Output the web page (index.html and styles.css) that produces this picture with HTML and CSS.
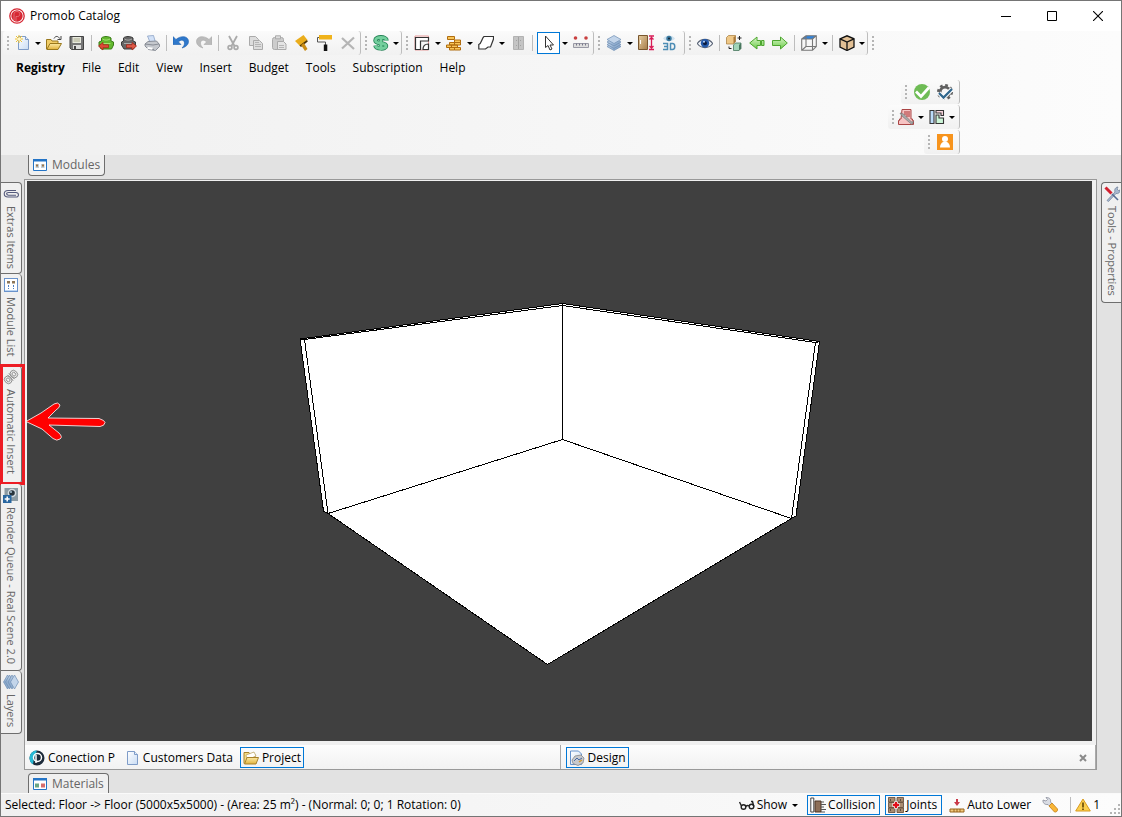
FILE: index.html
```html
<!DOCTYPE html>
<html lang="en">
<head>
<meta charset="utf-8">
<title>Promob Catalog</title>
<link rel="stylesheet" href="styles.css">
</head>
<body>
<svg class="defs" aria-hidden="true">
  <defs>
    <linearGradient id="gPaper" x1="0" y1="0" x2="1" y2="1"><stop offset="0" stop-color="#fff"/><stop offset="1" stop-color="#c9dcf4"/></linearGradient>
    <linearGradient id="gGold" x1="0" y1="0" x2="0" y2="1"><stop offset="0" stop-color="#fbe9a4"/><stop offset="1" stop-color="#e2b33c"/></linearGradient>
    <linearGradient id="gLayer" x1="0" y1="0" x2="1" y2="1"><stop offset="0" stop-color="#d3e2f2"/><stop offset="1" stop-color="#6f93bd"/></linearGradient>
    <linearGradient id="gArrow" x1="0" y1="0" x2="0" y2="1"><stop offset="0" stop-color="#d9f7c8"/><stop offset="1" stop-color="#6ccb4a"/></linearGradient>
    <linearGradient id="gDoor" x1="0" y1="0" x2="1" y2="1"><stop offset="0" stop-color="#e6cda2"/><stop offset="1" stop-color="#a67c48"/></linearGradient>
    <symbol id="caret" viewBox="0 0 6 3"><path d="M0 0h6L3 3z" fill="#000"/></symbol>
    <symbol id="page" viewBox="0 0 16 16"><path d="M3.500 1.500h7l3 3v10h-10z" fill="url(#gPaper)" stroke="#7f9cc8"/><path d="M10.500 1.500v3h3" fill="#e3eefc" stroke="#7f9cc8"/></symbol>
    <symbol id="layers" viewBox="0 0 16 16"><g stroke="#6d8db3" stroke-width=".7" fill="url(#gLayer)"><path d="M1 11.500L8 7.500l7 4-7 4z"/><path d="M1 9.500L8 5.500l7 4-7 4z"/><path d="M1 7L8 3l7 4-7 4z"/><path d="M1 4.500L8 .5l7 4-7 4z" fill="#c3d5ea"/></g></symbol>
  </defs>
</svg>
<div class="window">
  <header class="titlebar">
    <svg class="icon" viewBox="0 0 16 16"><circle cx="8" cy="8" r="7.200" fill="#fff" stroke="#d62733" stroke-width="1.300"/><circle cx="8" cy="8" r="5.700" fill="#d62733"/><path d="M7 14V8.500h1.500c3 0 3.500-5-.5-5-2 0-3 1-3 3V12" fill="none" stroke="#e9868d" stroke-width=".7"/></svg>
    <h1 class="title">Promob Catalog</h1>
    <button class="caption" aria-label="Minimize"><svg viewBox="0 0 10 10"><path d="M0 5.500h10" stroke="#000"/></svg></button>
    <button class="caption" aria-label="Maximize"><svg viewBox="0 0 10 10"><path d="M.5.5h9v9h-9z" fill="none" stroke="#000"/></svg></button>
    <button class="caption" aria-label="Close"><svg viewBox="0 0 10 10"><path d="M0 0l10 10M10 0L0 10" stroke="#000" stroke-width="1.100"/></svg></button>
  </header>

  <section class="ribbon">
    <div class="toolbars">
      <div class="strip">
        <i class="grip"></i>
        <button class="tool" aria-label="New"><svg class="icon" viewBox="0 0 16 16"><use href="#page"/><path d="M4 0v8M0 4h8M1 1l6 6M7 1L1 7" stroke="#f0c22e"/><circle cx="4" cy="4" r="1.500" fill="#fff8c8"/></svg></button>
        <button class="drop" aria-label="New options"><svg><use href="#caret"/></svg></button>
        <button class="tool" aria-label="Open"><svg class="icon" viewBox="0 0 16 16"><path d="M.5 14V4.500h4.500l1 1.500h6v3" fill="#f1cd68" stroke="#99781d"/><path d="M.8 14.500L4 8.500h11.500L12 14.500z" fill="url(#gGold)" stroke="#99781d"/><path d="M8 3.500c1.500-3 4.500-2.500 5.500 0M15 1v3.500h-3.500" fill="none" stroke="#444"/></svg></button>
        <button class="tool" aria-label="Save"><svg class="icon" viewBox="0 0 16 16"><path d="M1 1.500h13.500v13H2.500L1 13z" fill="#777" stroke="#444"/><path d="M3.500 2h8.500v6H3.500z" fill="#e8eadf"/><path d="M4.500 4h6.500M4.500 6h6.500" stroke="#aaa98c"/><path d="M4 10h8v4H4z" fill="#ddd"/><path d="M5 11h2v3H5z" fill="#444"/></svg></button>
        <i class="sep"></i>
        <button class="tool" aria-label="Import"><svg class="icon" viewBox="0 0 16 16"><path d="M3.500 6V3c2-2 7-2 9.500 0v3l2.500 1v3l-2 4H3L1 10V7z" fill="#63b82f" stroke="#397c17"/><path d="M4.500 4c2 1.500 5 1.500 7.500 0M3.500 8.500h9" stroke="#a4e271" fill="none"/><path d="M.5 11L5 7.500v2.200h5.500v3H5V15z" fill="#dd4a38" stroke="#a62619" stroke-width=".8"/></svg></button>
        <button class="tool" aria-label="Export"><svg class="icon" viewBox="0 0 16 16"><path d="M2.500 6V3c2-2 7-2 9.500 0v3l2.500 1v3l-2 4H3L.5 10V7z" fill="#666" stroke="#3a3a3a"/><path d="M3.500 4c2 1.500 5 1.500 7.500 0M3 8.500h9" stroke="#aaa" fill="none"/><path d="M15.500 11L11 7.500v2.200H5.500v3H11V15z" fill="#dd5a48" stroke="#a62619" stroke-width=".8"/></svg></button>
        <button class="tool" aria-label="Print"><svg class="icon" viewBox="0 0 16 16"><path d="M3.500 1l6-.5 2 7-5 1z" fill="#d2e1f7" stroke="#8ba2c5" stroke-width=".8"/><path d="M1 9l3-2.500 8.500-.5 3 3.500v2l-4 4-7-1L1 11z" fill="#c5c8cd" stroke="#777c86" stroke-width=".8"/><path d="M1 9l8 1 6-1M4 13l6 1.500" fill="none" stroke="#777c86" stroke-width=".8"/><path d="M4 12l5 .7-1 2-5-1z" fill="#fff"/></svg></button>
        <i class="sep"></i>
        <button class="tool" aria-label="Undo"><svg class="icon" viewBox="0 0 16 16"><path d="M0 1.500v8h8L5.500 7c2.500-3 6-2 6 1 0 2-1 3.500-2.500 5 4-1 6.500-3.500 6.500-6.500C15.500 1 8 0 3 4.500z" fill="#2f78cb" stroke="#1d5fae" stroke-width=".6"/></svg></button>
        <button class="tool" aria-label="Redo"><svg class="icon" viewBox="0 0 16 16"><path d="M16 1.500v8H8L10.500 7c-2.500-3-6-2-6 1 0 2 1 3.500 2.500 5C3 12 .5 9.500.5 6.500.5 1 8 0 13 4.500z" fill="#bbb" stroke="#aaa" stroke-width=".6"/></svg></button>
        <i class="sep"></i>
        <button class="tool" aria-label="Cut"><svg class="icon" viewBox="0 0 16 16"><path d="M4 1l5.500 10M12 1L6.500 11" stroke="#aaa" stroke-width="1.800"/><g fill="none" stroke="#aaa" stroke-width="1.700"><circle cx="5" cy="12.500" r="1.900"/><circle cx="11" cy="12.500" r="1.900"/></g></svg></button>
        <button class="tool" aria-label="Copy"><svg class="icon" viewBox="0 0 16 16"><g fill="#ddd" stroke="#aaa"><path d="M1.500 1.500h6l3 3v6h-9z"/><path d="M5.500 5.500h6l3 3v6h-9z"/></g><path d="M7 9.500h6M7 11.500h6M7 7.500h4" stroke="#b5b5b5"/></svg></button>
        <button class="tool" aria-label="Paste"><svg class="icon" viewBox="0 0 16 16"><rect x="1.500" y="2.500" width="11" height="12" rx="2" fill="#ccc" stroke="#aaa"/><path d="M4.500.8h5v3h-5z" fill="#ddd" stroke="#aaa"/><path d="M6.500 6.500h6l2.500 2.500v5.500H6.500z" fill="#e4e4e4" stroke="#aaa"/><path d="M8 10.500h5M8 12.500h5" stroke="#b5b5b5"/></svg></button>
        <button class="tool" aria-label="Brush"><svg class="icon" viewBox="0 0 16 16"><path d="M1 6L9.500 0l4 5L6 11z" fill="#eaad1c"/><path d="M5.500 10.500L13 5l.8 1.500L7 12z" fill="#4a3305"/><path d="M7 10l3-2 3.500 6-2.500 2z" fill="#c98c14"/></svg></button>
        <button class="tool" aria-label="Roller"><svg class="icon" viewBox="0 0 16 16"><path d="M2 0h13v4.500H2z" fill="#f0b31b"/><path d="M2 2.500H.5v4.500h8v3" fill="none" stroke="#555"/><path d="M6.800 9.500h3.500V16H6.800z" fill="#111"/></svg></button>
        <button class="tool" aria-label="Delete"><svg class="icon" viewBox="0 0 16 16"><path d="M2 3l12 11M14 2.500L2 13.500" stroke="#b5b5b5" stroke-width="2.200"/></svg></button>
      </div>
      <div class="strip">
        <i class="grip"></i>
        <button class="tool" aria-label="Budget prices"><svg class="icon" viewBox="0 0 16 16"><path d="M13.500 5.500c0-4-11-4.500-11 0 0 4 10.500 1.500 10.500 5.500 0 3.500-10 3-10.500-.5M8 .5v15" fill="none" stroke="#238255" stroke-width="4.500"/><path d="M13.500 5.500c0-4-11-4.500-11 0 0 4 10.500 1.500 10.500 5.500 0 3.500-10 3-10.500-.5M8 1v14" fill="none" stroke="#73cf9d" stroke-width="2.800"/></svg></button>
        <button class="drop" aria-label="Price options"><svg><use href="#caret"/></svg></button>
      </div>
      <div class="strip">
        <i class="grip"></i>
        <button class="tool" aria-label="Walls"><svg class="icon" viewBox="0 0 16 16"><path d="M1 1h13.500v14H1z" fill="none" stroke="#e59a9a"/><path d="M1.500 14.500v-12h13V6H6.500v8.500z" fill="#fff" stroke="#333" stroke-width="1.200"/><path d="M14.500 9v5.500H9c0-3.500 2-5.500 5.500-5.500z" fill="#fff" stroke="#333" stroke-width="1.200"/></svg></button>
        <button class="drop wide" aria-label="Wall options"><svg><use href="#caret"/></svg></button>
        <button class="tool" aria-label="Bricks"><svg class="icon" viewBox="0 0 16 16"><g fill="#f8c659" stroke="#b06c0e"><path d="M1.500 1.500h7v3h-7zM3.500 7.500h5v2.500h-5zM8.500 7.500h6v2.500h-6zM.5 10h5v2.500h-5zM5.500 10h6v2.500h-6zM3.500 12.500h5V15h-5zM8.500 12.500h6V15h-6zM8.500 5h6v2.500h-6z"/></g></svg></button>
        <button class="drop wide" aria-label="Brick options"><svg><use href="#caret"/></svg></button>
        <button class="tool" aria-label="Shape"><svg class="icon" viewBox="0 0 16 16"><path d="M6 1.500h9.500V4L12.500 12H10l-2.500 2H.8V9.500C4 8 3.500 3.500 6 1.500z" fill="#fff" stroke="#333" stroke-width="1.200"/></svg></button>
        <button class="drop wide" aria-label="Shape options"><svg><use href="#caret"/></svg></button>
        <button class="tool" aria-label="Cabinet"><svg class="icon" viewBox="0 0 16 16"><path d="M3.500 1.500h10v13h-10z" fill="#c4c4c4" stroke="#b3b3b3"/><path d="M8.500 2v12M6 5.500h1M10 5.500h1M6 10.500h1M10 10.500h1" stroke="#a2a2a2"/></svg></button>
        <i class="sep"></i>
        <button class="tool selected" aria-label="Select" aria-pressed="true"><svg class="icon" viewBox="0 0 16 16"><path d="M4.500 1v11.500L7 10.500l2 4.500 2-1-2-4h3.500z" fill="#fff" stroke="#333"/></svg></button>
        <button class="drop wide" aria-label="Select options"><svg><use href="#caret"/></svg></button>
        <button class="tool" aria-label="Measure"><svg class="icon" viewBox="0 0 16 16"><circle cx="2.500" cy="3" r="1.800" fill="#c94040"/><circle cx="13" cy="3" r="1.800" fill="#c94040"/><path d="M.5 8.500h15v4H.5z" fill="#ddd" stroke="#9999a5"/><path d="M3.500 8.500v2M6.500 8.500v2M9.500 8.500v2M12.500 8.500v2" stroke="#77778a"/></svg></button>
      </div>
      <div class="strip roomy">
        <i class="grip"></i>
        <button class="tool" aria-label="Layers"><svg class="icon"><use href="#layers"/></svg></button>
        <button class="drop wide" aria-label="Layer options"><svg><use href="#caret"/></svg></button>
        <button class="tool" aria-label="Door height"><svg class="icon" viewBox="0 0 16 16"><path d="M.5.500h9v14h-9z" fill="url(#gDoor)" stroke="#79572e"/><path d="M2.500 5v4" stroke="#fff"/><path d="M11 1h5M11 14.500h5M13.500 2v12M11.500 4.500l2-2 2 2M11.500 11l2 2 2-2" fill="none" stroke="#d81b56" stroke-width="1.300"/></svg></button>
        <button class="tool" aria-label="3D view"><svg class="icon" viewBox="0 0 16 16"><path d="M2 3.500c3-4 9-4 12 0-3 3.500-9 3.500-12 0z" fill="#cfe2ef"/><circle cx="8" cy="3.500" r="2.700" fill="#39799f"/><circle cx="8" cy="3.500" r="1" fill="#123"/><path d="M2 8.500h4.500v6H2M3 11.500h3.500M9.500 8.500v6h2c3 0 3-6 0-6z" fill="none" stroke="#4d8db5" stroke-width="1.500"/></svg></button>
      </div>
      <div class="strip">
        <i class="grip"></i>
        <button class="tool" aria-label="Visibility"><svg class="icon" viewBox="0 0 16 16"><path d="M.3 8.500C4 3 12 3 15.700 8.500 12 14 4 14 .3 8.500z" fill="#f2f5fa" stroke="#596375" stroke-width="1.200"/><circle cx="8" cy="8.200" r="4.200" fill="#255aaa"/><circle cx="8" cy="8.200" r="2" fill="#0c1c40"/><circle cx="7" cy="6.700" r="1" fill="#bcd6fa"/></svg></button>
        <i class="sep"></i>
        <button class="tool" aria-label="Replace module"><svg class="icon" viewBox="0 0 16 16"><path d="M.5 2.500l2-2h7v6l-2 2.500h-7z" fill="#efc887" stroke="#a57936" stroke-width=".7"/><path d="M7.500 9V2.500l2-2V6.500z" fill="#a9793a"/><path d="M7.500 10l2-2H15v5.500l-2 2H7.500z" fill="#a2d4b8" stroke="#48765d" stroke-width=".8"/><path d="M13 15.500V10l2-2v5.500z" fill="#48765d"/><path d="M13.500 1v4M11.500 3h4M3 11.500v2h2.500" fill="none" stroke="#222"/></svg></button>
        <button class="tool" aria-label="Previous"><svg class="icon" viewBox="0 0 16 16"><path d="M.7 8L8 2v3.500h3.500v5H8V14zM12.500 5.500h2.500v5h-2.500z" fill="url(#gArrow)" stroke="#4da62f"/></svg></button>
        <button class="tool" aria-label="Next"><svg class="icon" viewBox="0 0 16 16"><path d="M15.300 8L8.500 2v3.500h-8v5h8V14z" fill="url(#gArrow)" stroke="#4da62f"/></svg></button>
        <i class="sep"></i>
        <button class="tool" aria-label="Top view"><svg class="icon" viewBox="0 0 16 16"><path d="M.7 4L5 .7h10.300L11.500 4z" fill="#2f83dc"/><path d="M.7 4L5 .7h10.300v10.800L11.500 15.300H.7zM.7 4h10.800v11.300M11.500 4L15.300.7M5 1v10.500h10M5 11.500L.7 15.300" fill="none" stroke="#777" stroke-width="1.100"/></svg></button>
        <button class="drop wide" aria-label="View options"><svg><use href="#caret"/></svg></button>
        <i class="sep"></i>
        <button class="tool" aria-label="Render style"><svg class="icon" viewBox="0 0 16 16"><path d="M1 3.800l7-3 7 3v8.400l-7 3.300-7-3.300z" fill="#e2c095" stroke="#111" stroke-width="1.300"/><path d="M1 3.800l7 3.200 7-3.200M8 7v8" fill="none" stroke="#111" stroke-width="1.300"/></svg></button>
        <button class="drop" aria-label="Style options"><svg><use href="#caret"/></svg></button>
      </div>
      <div class="strip last"><i class="grip"></i></div>
    </div>

    <nav class="menu">
      <button class="bold">Registry</button><button>File</button><button>Edit</button><button>View</button><button>Insert</button><button>Budget</button><button>Tools</button><button>Subscription</button><button>Help</button>
    </nav>

    <div class="side-strips">
      <div class="strip">
        <i class="grip"></i>
        <button class="tool" aria-label="Approve"><svg class="icon" viewBox="0 0 16 16"><circle cx="8" cy="8" r="8" fill="#6ebc55"/><path d="M2 7.500l5 5 8-9" fill="none" stroke="#fff" stroke-width="2.800"/></svg></button>
        <button class="tool" aria-label="Validate settings"><svg class="icon" viewBox="0 0 16 16"><circle cx="8" cy="8" r="6.800" fill="none" stroke="#606060" stroke-width="2.400" stroke-dasharray="2.700 2.640"/><circle cx="8" cy="8" r="4.800" fill="none" stroke="#606060" stroke-width="2.800"/><path d="M2 9l4.500 4.500L15 5" fill="none" stroke="#fff" stroke-width="4.500"/><path d="M2 9l4.500 4.500L15 5" fill="none" stroke="#32688e" stroke-width="2.300"/></svg></button>
      </div>
      <div class="strip snug">
        <i class="grip"></i>
        <button class="tool" aria-label="Tool list"><svg class="icon" viewBox="0 0 16 16"><path d="M4 .5h9V10h1.500v1.500h1v4H.5v-4h1V10H3z" fill="#f6c3c3" stroke="#a44"/><path d="M6 3h6M6 5h6M8 7h4" stroke="#a33"/><path d="M2 4l3.500 1 8 8 2-.5-1.500 3-2.500-2L4 7z" fill="#aaa" stroke="#777" stroke-width=".7"/></svg></button>
        <button class="drop" aria-label="Tool list options"><svg><use href="#caret"/></svg></button>
        <button class="tool" aria-label="Panels"><svg class="icon" viewBox="0 0 16 16"><g stroke="#333" stroke-width="1.100"><path d="M1 1.500h4v13H1z" fill="#bcdcfa"/><path d="M7 1.500h7.500v5H12V4H7z" fill="#fbd7df"/><path d="M7 6h3v3h4.500v5.500H7z" fill="#ccf5d8"/></g></svg></button>
        <button class="drop" aria-label="Panel options"><svg><use href="#caret"/></svg></button>
      </div>
      <div class="strip">
        <i class="grip"></i>
        <button class="tool end" aria-label="Account"><svg class="icon" viewBox="0 0 16 16"><path d="M0 0h16v16H0z" fill="#f7941d"/><circle cx="8" cy="5" r="3" fill="#fff"/><path d="M3 13.500c0-3 1.500-4.500 3-5.500h4c1.500 1 3 2.500 3 5.500z" fill="#fff"/></svg></button>
      </div>
    </div>
  </section>

  <main class="dock">
    <aside class="rail left">
      <button class="vtab extras"><svg class="icon" viewBox="0 0 16 16"><path d="M13 4.500H5c-5 0-5 6.500 0 6.500h8c3.500 0 3-4.500 0-4.500H5.500c-2.500 0-2.500 2.700 0 2.700H13" fill="none" stroke="#555b7d" stroke-width="1.100"/></svg><span>Extras Items</span></button>
      <button class="vtab modules-list"><svg class="icon" viewBox="0 0 16 16"><rect x="1.500" y="1.500" width="13" height="13" fill="#fff" stroke="#6992cb"/><path d="M2 13.500h12" stroke="#bcd5f2"/><g fill="#8d7657"><path d="M4 4h3v2.500H4zM9 4h3v2.500H9z"/></g><path d="M5.500 8v4M10.500 8v4" stroke="#4a7dc5" stroke-dasharray="2 1"/></svg><span>Module List</span></button>
      <button class="vtab auto"><svg class="icon" viewBox="0 0 16 16"><g fill="none" stroke="#888" stroke-width=".9" transform="rotate(45 8 8)"><ellipse cx="8" cy="4" rx="4" ry="3.500"/><ellipse cx="8" cy="4" rx="2" ry="1.700"/><ellipse cx="8" cy="12" rx="4" ry="3.500"/><ellipse cx="8" cy="12" rx="2" ry="1.700"/><path d="M4 7h8M4 9h8"/></g></svg><span>Automatic Insert</span>
        <svg class="pointer" viewBox="0 0 82 40"><path d="M2 20.500L17 12 30 3q4-2.500 6 1-.5 3-4 5l-8 8L75 17.500q6 2 6 4-.5 3.500-5 4L25 24l10 8q4 4 1 6-3 2.500-7-.5L18 28z" fill="#f00" stroke="#fff" stroke-width=".8"/></svg></button>
      <button class="vtab render"><svg class="icon" viewBox="0 0 16 16"><path d="M1.500 1h13.500v13H1.500z" fill="#8c9ba3"/><circle cx="9" cy="6" r="4.300" fill="#d5dde2"/><circle cx="9" cy="6" r="2.800" fill="#28343c"/><circle cx="8" cy="5" r="1" fill="#aac4d5"/><path d="M0 8h8.500v8H0z" fill="#2967a0"/><path d="M4.200 9.500v5M1.700 12h5" stroke="#fff" stroke-width="1.500"/></svg><span>Render Queue - Real Scene 2.0</span></button>
      <button class="vtab layers"><svg class="icon turned"><use href="#layers"/></svg><span>Layers</span></button>
    </aside>

    <div class="center">
      <div class="htabs"><button class="htab top"><svg class="icon" viewBox="0 0 16 16"><path d="M1.500 2.500h13v11h-13z" fill="#fff" stroke="#2474c6"/><path d="M1 2h14v2.500H1z" fill="#2474c6"/><path d="M3.500 7H7v4H3.500zM9 7h3.500v4H9z" fill="#c0cdd8"/><path d="M4 7.500h2v2H4zM10 7.500h2v2h-2z" fill="#9a7649"/></svg>Modules</button></div>
      <div class="frame">
        <div class="viewport">
          <svg class="scene" viewBox="0 0 1065 560" role="img" aria-label="Room with floor and two walls">
            <path class="room" d="M273 158L535.500 122.500 792.500 160.500 769 335 764.500 337.500 520.500 483.500 301 332.500 296.500 330z" fill="#fff"/>
            <path class="room" d="M273 158L277.500 158.500 535.500 124.500 788.500 161.500 792.500 160.500M277.500 158.500L301 332.500 535.500 258.500 764.500 337.500 788.500 161.500M535.500 122.500V258.500" fill="none"/>
          </svg>
        </div>
        <div class="views">
          <div class="view-group nav-group">
            <button class="view"><svg class="icon" viewBox="0 0 16 16"><circle cx="8" cy="8" r="7.500" fill="#1d2b3a"/><path d="M8 .5A7.500 7.500 0 0 0 4 14.300L5 8z" fill="#28b9d5"/><circle cx="8.500" cy="7.500" r="4" fill="none" stroke="#fff" stroke-width="1.500"/><path d="M7 5v8" stroke="#fff" stroke-width="1.500"/></svg>Conection P</button>
            <button class="view"><svg class="icon"><use href="#page"/></svg>Customers Data</button>
            <button class="view active"><svg class="icon" viewBox="0 0 16 16"><path d="M1 13.500v-11h5l1.500 2H12V7" fill="#f5dc84" stroke="#a8822a"/><path d="M3 5l8-3 2 4-9 4z" fill="#fff" stroke="#b59b54" stroke-width=".7"/><path d="M1.500 14L4 7.500h11.500L13 14z" fill="url(#gGold)" stroke="#a8822a"/></svg>Project</button>
          </div>
          <div class="view-group design-group">
            <button class="view active"><svg class="icon" viewBox="0 0 16 16"><path d="M1.500 1h8l3 3v10.500h-11z" fill="url(#gPaper)" stroke="#6592cc"/><path d="M3 10l3-4 6-1 3 3-1 5-5 2.500-5-2z" fill="#c7c9cd" stroke="#888" stroke-width=".8"/><path d="M5 11l3-3 2 2 3-2" fill="none" stroke="#4569a5"/><path d="M10 12l3-2" stroke="#d49a30" stroke-width="1.500"/></svg>Design</button>
            <button class="close-view" aria-label="Close view"><svg viewBox="0 0 8 8"><path d="M1 1l6 6M7 1L1 7" stroke="#8a8a8a" stroke-width="2"/></svg></button>
          </div>
        </div>
      </div>
      <div class="htabs"><button class="htab bottom"><svg class="icon" viewBox="0 0 16 16"><path d="M1.500 2.500h13v11h-13z" fill="#fff" stroke="#2474c6"/><path d="M1 2h14v2.500H1z" fill="#2474c6"/><path d="M3 7.500h4v4H3z" fill="#6aa583"/><path d="M9 7.500h4v4H9z" fill="#d66c6c"/></svg>Materials</button></div>
    </div>

    <aside class="rail right">
      <button class="vtab props"><svg class="icon" viewBox="0 0 16 16"><path d="M3 14.500L11 6c-1-3 1-5 3-5l-1 2 1.500 1.500L16 4c0 3-2 4-4 3.500L4.500 15.500z" fill="#a9b8cf" stroke="#6c7c96" stroke-width=".7"/><path d="M1.500 1.500l6 6" stroke="#d2202f" stroke-width="3"/><path d="M8 8l6 6" stroke="#566b92" stroke-width="1.600"/></svg><span>Tools - Properties</span></button>
    </aside>
  </main>

  <footer class="status">
    <p class="selection">Selected: Floor -&gt; Floor (5000x5x5000) - (Area: 25 m²) - (Normal: 0; 0; 1 Rotation: 0)</p>
    <button class="state show"><svg class="icon" viewBox="0 0 16 16"><g fill="none" stroke="#222" stroke-width="1.400"><circle cx="4.500" cy="10" r="2.300"/><circle cx="12.500" cy="9.500" r="2.300"/><path d="M6.800 9.500c1-1 2.500-1 3.400-.5M2.500 9L.5 5M14.800 9.500L13.500 4.500h-1.500"/></g></svg>Show<svg class="caret"><use href="#caret"/></svg></button>
    <button class="state on" aria-pressed="true"><svg class="icon" viewBox="0 0 16 16"><path d="M.8 1h3v14h-3z" fill="#fff" stroke="#444"/><path d="M5 4h6v11H5z" fill="#8d6f58" stroke="#4c3727"/><path d="M11 5h3M11 7.500h5M11 10h3M11 12.500h5M11 15h4" stroke="#555"/></svg>Collision</button>
    <button class="state on" aria-pressed="true"><svg class="icon" viewBox="0 0 16 16"><g fill="#a88b70" stroke="#5e4633" stroke-width=".8"><path d="M.5.500H7v4.500H.5zM9 .5h6.500v4.500H9zM.5 5.500H7v5H.5zM9 5.500h6.500v5H9zM.5 11H7v4.500H.5zM9 11h6.500v4.500H9z"/></g><path d="M2 3h1M12 3h1M2 13h1M12 13h1" stroke="#111"/><path d="M8 4.500v7M4.500 8h7" stroke="#fff" stroke-width="4"/><path d="M8 5v6M5 8h6" stroke="#e20d18" stroke-width="2.400"/></svg>Joints</button>
    <button class="state"><svg class="icon" viewBox="0 0 16 16"><path d="M7 2h2v3h2l-3 4-3-4h2z" fill="#c93848"/><path d="M1 12h14v3H1z" fill="#f3cb7e" stroke="#99641d"/><path d="M5 12v3M8 12v3M11 12v3" stroke="#99641d"/></svg>Auto Lower</button>
    <button class="state wrench" aria-label="Options"><svg class="icon" viewBox="0 0 16 16"><path d="M1 3l3 1 1.500-1.500L4 .5c4 0 5 2 4.500 4.500l2 2L8 9.500l-2-2C3 8 .5 6 1 3z" fill="#d9dce4" stroke="#8b8f9c" stroke-width=".8"/><path d="M7 9l3-3 5.500 6c.5 2-1.500 3.500-3 3z" fill="#f9b637" stroke="#c17d17" stroke-width=".8"/></svg></button>
    <i class="sep"></i>
    <button class="state warn"><svg class="icon" viewBox="0 0 16 16"><path d="M8 2L15.300 14H.7z" fill="#fbcf4f" stroke="#d89a1e" stroke-linejoin="round"/><path d="M8 5.500v5M8 11.500v1.500" stroke="#5a3d00" stroke-width="1.500"/></svg>1</button>
    <svg class="sizer" viewBox="0 0 12 12"><path d="M9 0h2v2H9zM5 4h2v2H5zM9 4h2v2H9zM1 8h2v2H1zM5 8h2v2H5zM9 8h2v2H9z" fill="#b5b5b5"/></svg>
  </footer>
</div>
</body>
</html>
```
FILE: styles.css
```css
* { box-sizing: border-box; }

body {
  margin: 0;
  font: 12px/16px "Open Sans", "Noto Sans", sans-serif;
  color: #000;
}

button {
  font: inherit;
  color: inherit;
  background: none;
  border: 0;
  padding: 0;
}

svg { display: block; flex: none; }
.defs { position: absolute; width: 0; height: 0; }
.icon { width: 16px; height: 16px; }

.window {
  display: flex;
  flex-direction: column;
  min-height: 100vh;
  border: 1px solid #757575;
  background: #e2e2e2;
}

/* Title bar */
.titlebar {
  display: flex;
  align-items: center;
  height: 30px;
  padding-left: 8px;
  background: #fff;
}
.title { flex: 1; margin: 0 0 0 5px; font-size: 12px; font-weight: 400; }
.caption { display: grid; place-items: center; width: 46px; height: 30px; }
.caption svg { width: 10px; height: 10px; }

/* Toolbars and menu */
.ribbon {
  height: 124px;
  background: linear-gradient(90deg, #f0f0f0, #fcfcfc);
}
.toolbars { display: flex; height: 24px; padding-left: 2px; }
.strip {
  display: flex;
  align-items: center;
  height: 24px;
  padding-right: 1px;
  border-right: 1px solid #bdbdbd;
  border-radius: 3px;
  background: linear-gradient(#fbfbfb, #f1f1f1);
}
.strip.roomy { padding-right: 4px; }
.strip.last { border-right: 0; background: none; }
.grip {
  width: 2px;
  height: 14px;
  margin: 0 2px 0 4px;
  background: repeating-linear-gradient(#b5b5b5 0 2px, transparent 2px 4px);
}
.sep { width: 1px; height: 16px; margin: 0 2px 0 3px; background: #bdbdbd; }
.tool { display: grid; place-items: center; width: 23px; height: 22px; }
.tool.selected { margin-left: 2px; border: 1px solid #0078d7; background: #fff; }
.drop { display: grid; place-items: center; width: 8px; height: 22px; }
.drop.wide { width: 9px; }
.drop svg { width: 6px; height: 3px; }

.menu { display: flex; gap: 17px; height: 25px; padding: 5px 15px; }
.menu .bold { font-weight: 700; }

.side-strips {
  display: flex;
  flex-direction: column;
  align-items: flex-end;
  gap: 1px;
  padding-right: 161px;
}
.side-strips .strip { padding-right: 3px; }
.side-strips .grip { margin-right: 3px; }
.side-strips .snug .grip { margin-right: 0; }

/* Docking area */
.dock { display: flex; flex: 1; }
.rail { display: flex; flex-direction: column; flex: none; padding-top: 27px; }
.rail.left { width: 23px; }
.rail.right { width: 24px; padding-left: 4px; }

.vtab {
  position: relative;
  display: flex;
  flex-direction: column;
  align-items: center;
  gap: 4px;
  width: 21px;
  padding: 3px 0 5px;
  border: 1px solid #6e6e6e;
  border-left: 0;
  border-radius: 0 4px 4px 0;
  background: #f0f0f0;
  color: #666;
  font-size: 11px;
}
.vtab + .vtab { border-top: 0; }
.vtab span { writing-mode: vertical-rl; line-height: 18px; white-space: nowrap; }
.vtab .turned { transform: rotate(90deg); }
.extras { height: 92px; }
.modules-list { height: 92px; }
.auto { height: 118px; }
.render { height: 187px; }
.layers { height: 63px; }
.props {
  width: 20px;
  height: 121px;
  border: 1px solid #6e6e6e;
  border-right: 0;
  border-radius: 4px 0 0 4px;
}
.auto::after {
  content: "";
  position: absolute;
  inset: -2px -4px -2px -1px;
  border: 3px solid #ed1c24;
}
.pointer { position: absolute; left: 23px; top: 35px; z-index: 1; width: 82px; height: 40px; }

.center { display: flex; flex-direction: column; flex: 1; min-width: 0; }
.htabs { padding-left: 4px; }
.htab {
  display: flex;
  align-items: center;
  gap: 4px;
  padding: 0 4px 0 3px;
  border: 1px solid #6e6e6e;
  background: #f0f0f0;
  color: #666;
}
.htab.top { height: 21px; margin-bottom: 3px; border-top: 0; border-radius: 0 0 4px 4px; }
.htab.bottom { height: 20px; margin-top: 3px; border-bottom: 0; border-radius: 4px 4px 0 0; }

.frame {
  display: flex;
  flex-direction: column;
  flex: 1;
  border: 1px solid #999;
  background: #f0f0f0;
}
.viewport { flex: 1; display: flex; margin: 1px 4px 0 2px; background: #404040; }
.scene { flex: 1; width: 100%; min-width: 0; }
.room { stroke: #000; shape-rendering: crispEdges; }

.views {
  display: grid;
  grid-template-columns: 1fr 1fr;
  height: 28px;
  padding-top: 4px;
}
.view-group {
  display: flex;
  align-items: center;
  padding-top: 1px;
  background: linear-gradient(#fdfdfd, #f2f2f2);
  border-right: 1px solid #aaa;
}
.nav-group { gap: 5px; padding-left: 2px; }
.design-group { padding-right: 8px; padding-left: 5px; }
.view {
  display: flex;
  align-items: center;
  gap: 3px;
  height: 21px;
  padding: 0 2px;
  white-space: nowrap;
}
.view.active { border: 1px solid #0078d7; }
.close-view { margin-left: auto; }
.close-view svg { width: 8px; height: 8px; }

/* Status bar */
.status {
  display: flex;
  align-items: center;
  height: 23px;
  border-top: 1px solid #fafafa;
  background: linear-gradient(90deg, #f0f0f0, #fcfcfc);
}
.selection { flex: 1; margin: 0 0 0 4px; white-space: nowrap; }
.state {
  display: flex;
  align-items: center;
  gap: 2px;
  height: 20px;
  margin-right: 5px;
  padding: 0 4px 0 2px;
  white-space: nowrap;
}
.state.on { border: 1px solid #0078d7; }
.state .caret { width: 6px; height: 3px; margin-left: 3px; }
.sizer { width: 12px; height: 12px; align-self: flex-end; }
```
